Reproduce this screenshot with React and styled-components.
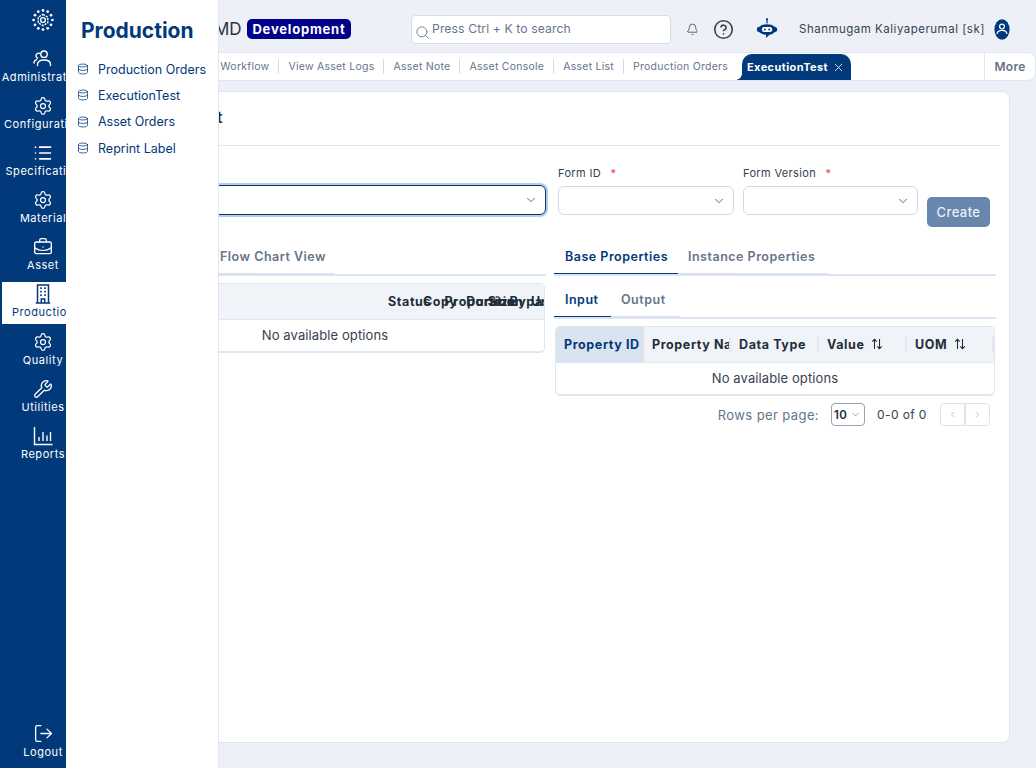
import React from 'react';
import styled, { createGlobalStyle } from 'styled-components';
import { Bell, CircleHelp, ChevronDown, ChevronLeft, ChevronRight, Database, List, Settings, BriefcaseBusiness, Wrench, LogOut, X, Search } from 'lucide-react';

const NAVY = '#01397a';

const Global = createGlobalStyle`
    html, body { margin: 0; padding: 0; height: 100%; }
    body { font-family: Inter, "Noto Sans", "Liberation Sans", sans-serif; background: #edf1f7; overflow: hidden; }
    * { box-sizing: border-box; }
`;

const Page = styled.div`
    position: relative;
    display: flex;
    width: 1036px;
    height: 768px;
    overflow: hidden;
`;

const Sidebar = styled.nav`
    flex: 0 0 66px;
    height: 768px;
    background: ${NAVY};
    display: flex;
    flex-direction: column;
    overflow: hidden;
    padding-top: 9px;
`;

const SideItem = styled.div`
    flex: 0 0 auto;
    width: 82px;
    margin-left: 2px;
    height: ${props => props.$h || 47}px;
    display: flex;
    flex-direction: column;
    align-items: center;
    gap: 1px;
    color: ${props => props.$active ? NAVY : '#fff'};
    background: ${props => props.$active ? '#fff' : 'transparent'};
    padding-top: ${props => props.$active ? 2 : 0}px;
    margin-top: ${props => props.$active ? -2 : 0}px;
    margin-bottom: ${props => props.$active ? 8 : 0}px;
    ${props => props.$bottom && 'margin-top: auto; margin-bottom: 3px;'}
`;

const SideLabel = styled.span`
    font-size: 11px;
    line-height: 14px;
    letter-spacing: 0.55px;
    white-space: nowrap;
`;

const LogoWrap = styled.div`
    flex: 0 0 40px;
    width: 86px;
    display: flex;
    justify-content: center;
    align-items: flex-start;
    color: #fff;
`;

const Flyout = styled.aside`
    position: absolute;
    left: 66px;
    top: 0;
    width: 153px;
    height: 768px;
    background: #fff;
    border-right: 1px solid #dfe6f0;
    z-index: 5;
`;

const FlyoutTitle = styled.h2`
    margin: 16px 0 10px 15px;
    font-size: 21px;
    line-height: 30px;
    font-weight: 700;
    color: ${NAVY};
    white-space: nowrap;
`;

const FlyoutItem = styled.div`
    height: 26.3px;
    display: flex;
    align-items: center;
    gap: 9px;
    padding-left: 11px;
    font-size: 12.5px;
    color: ${NAVY};
    white-space: nowrap;
`;

const Main = styled.main`
    flex: 1;
    min-width: 0;
    display: flex;
    flex-direction: column;
`;

const Header = styled.header`
    height: 52px;
    flex: 0 0 52px;
    display: flex;
    align-items: center;
    padding: 6px 0 0 148px;
`;

const AppName = styled.span`
    font-size: 17px;
    color: #2a3444;
    width: 26px;
`;

const EnvBadge = styled.span`
    margin-left: 7px;
    height: 20px;
    width: 104px;
    background: #00008b;
    border-radius: 5px;
    color: #fff;
    font-size: 13px;
    font-weight: 700;
    letter-spacing: 0.8px;
    display: flex;
    align-items: center;
    justify-content: center;
`;

const SearchBox = styled.div`
    margin-left: 60px;
    width: 260px;
    height: 29px;
    background: #fff;
    border: 1px solid #d5dde9;
    border-radius: 4px;
    display: flex;
    align-items: center;
    gap: 2px;
    padding: 0 3px;
    color: #687489;
    font-size: 12.2px;
    letter-spacing: 0.1px;
    & svg { margin-top: 6px; }
    & span { margin-top: -2px; }
`;

const IconSlot = styled.span`
    display: flex;
    align-items: center;
    justify-content: center;
    margin-left: ${props => props.$ml}px;
    color: ${props => props.$color || '#37414f'};
`;

const UserName = styled.span`
    margin-left: 21px;
    font-size: 11.5px;
    color: #37414f;
    letter-spacing: 0.5px;
    white-space: nowrap;
    width: 186px;
`;

const TabStrip = styled.div`
    height: 29px;
    flex: 0 0 29px;
    margin-left: 10px;
    background: #fff;
    border: 1px solid #dfe6f0;
    border-radius: 0 8px 8px 0;
    display: flex;
    align-items: flex-end;
    overflow: hidden;
`;

const TabList = styled.div`
    flex: 1;
    min-width: 0;
    height: 100%;
    display: flex;
    align-items: center;
    justify-content: flex-end;
    padding-right: 133px;
    position: relative;
`;

const PageTab = styled.span`
    font-size: 10.5px;
    letter-spacing: 0.25px;
    color: #67748a;
    white-space: nowrap;
    padding: 0 9px;
    line-height: 15px;
    border-right: ${props => props.$last ? '0' : '1px solid #d5dce6'};
`;

const ActiveTab = styled.span`
    position: relative;
    flex: 0 0 109px;
    margin-left: 5px;
    align-self: flex-end;
    height: 26px;
    background: ${NAVY};
    border-radius: 10px 10px 0 0;
    color: #fff;
    font-size: 11px;
    font-weight: 700;
    letter-spacing: 0.4px;
    display: flex;
    align-items: center;
    gap: 4px;
    padding-left: 5px;
    white-space: nowrap;
    &::before {
        content: '';
        position: absolute;
        left: -6px;
        bottom: 0;
        width: 6px;
        height: 6px;
        background: radial-gradient(circle at 0 0, transparent 5.5px, ${NAVY} 6px);
    }
`;

const MoreButton = styled.span`
    flex: 0 0 51px;
    height: 100%;
    border-left: 1px solid #dfe6f0;
    display: flex;
    align-items: center;
    justify-content: center;
    color: #67748a;
    font-size: 12px;
    font-weight: 600;
    letter-spacing: 0.3px;
`;

const Card = styled.section`
    margin: 10px 26px 0 25px;
    height: 652px;
    background: #fff;
    border: 1px solid #dfe6f0;
    border-radius: 8px;
    padding: 0 9px 0 8px;
`;

const CardTitle = styled.div`
    height: 54px;
    border-bottom: 1px solid #dfe6f0;
    display: flex;
    align-items: center;
    padding-left: 7px;
    padding-bottom: 4px;
    font-size: 16.5px;
    font-weight: 500;
    color: #1f2937;
`;

const Columns = styled.div`
    display: grid;
    grid-template-columns: 442px 442px;
    gap: 8px;
    padding: 20px 4px 0;
`;

const Column = styled.div`
    min-width: 0;
`;

const FormRow = styled.div`
    height: 74px;
    display: flex;
    align-items: flex-start;
    gap: 9px;
    padding: ${props => props.$left ? '0' : '0 6px 0 4px'};
`;

const Field = styled.div`
    width: ${props => props.$w ? props.$w + 'px' : '100%'};
`;

const Label = styled.label`
    display: block;
    height: 20px;
    font-size: 11px;
    line-height: 15px;
    letter-spacing: 0.35px;
    color: #37414f;
    & em { color: #f03e3e; font-style: normal; margin-left: 6px; }
`;

const Select = styled.div`
    border: 1px solid ${props => props.$focus ? NAVY : '#cfd9e7'};
    border-radius: 6px;
    background: #fff;
    display: flex;
    align-items: center;
    justify-content: flex-end;
    padding-right: 7px;
    color: #47597a;
    margin-top: ${props => props.$focus ? -1 : 0}px;
    height: ${props => props.$focus ? 30 : 29}px;
    box-shadow: ${props => props.$focus ? '0 0 0 2px #b9cce4' : 'none'};
`;

const CreateButton = styled.button`
    margin-top: 31px;
    width: 63px;
    height: 30px;
    border: 0;
    border-radius: 5px;
    background: #6787ad;
    color: #e9eff6;
    font-family: inherit;
    font-size: 13px;
    font-weight: 500;
    letter-spacing: 0.4px;
`;

const Tabs = styled.div`
    display: flex;
    height: ${props => props.$h}px;
    border-bottom: 2px solid #dbe4f0;
`;

const Tab = styled.div`
    width: ${props => props.$w}px;
    height: 100%;
    display: flex;
    align-items: center;
    padding-left: ${props => props.$ghost ? 10 : 11}px;
    padding-top: ${props => props.$pt || 0}px;
    font-size: 12.5px;
    font-weight: 600;
    letter-spacing: 0.5px;
    white-space: nowrap;
    color: ${props => props.$active ? NAVY : '#67748a'};
    border-bottom: 1px solid ${props => props.$active ? NAVY : 'transparent'};
    ${props => props.$ghost && 'border-image: linear-gradient(90deg, #dedfe0 0, #dedfe0 30%, #d8e2f1 45%) 1;'}
`;

const Table = styled.div`
    margin: 7px 1px 0;
    border: 1px solid #dfe6f0;
    border-bottom-width: 2px;
    border-radius: 5px;
    overflow: hidden;
`;

const HeadRow = styled.div`
    height: 36px;
    display: flex;
    align-items: center;
    background: #f0f4f9;
    border-bottom: 1px solid #dfe6f0;
    padding-left: ${props => props.$pad || 0}px;
    padding-bottom: ${props => props.$pad ? 1 : 0}px;
`;

const SquashedCell = styled.span`
    flex: 0 0 ${props => props.$w}px;
    width: ${props => props.$w}px;
    font-size: 12.5px;
    font-weight: 700;
    letter-spacing: 0.6px;
    color: #222d3b;
    white-space: nowrap;
`;

const HeadCell = styled.div`
    flex: 0 0 ${props => props.$w}px;
    height: 100%;
    position: relative;
    display: flex;
    align-items: center;
    gap: 7px;
    padding-left: 8px;
    padding-bottom: 1px;
    overflow: hidden;
    font-size: 12.5px;
    font-weight: 700;
    letter-spacing: 0.6px;
    white-space: nowrap;
    color: ${props => props.$active ? NAVY : '#222d3b'};
    background: ${props => props.$active ? '#dae4f0' : 'transparent'};
    &::after {
        content: '';
        display: ${props => props.$sep ? 'block' : 'none'};
        position: absolute;
        right: 0;
        top: 10px;
        bottom: 10px;
        width: 2px;
        background: #e1e7f0;
    }
`;

const EmptyRow = styled.div`
    height: 31px;
    padding-bottom: 1px;
    display: flex;
    align-items: center;
    justify-content: center;
    font-size: 13px;
    letter-spacing: 0.1px;
    color: #37414f;
`;

const Pager = styled.div`
    height: 23px;
    margin-top: 7px;
    display: flex;
    align-items: center;
    justify-content: flex-end;
    padding-right: 6px;
    color: #67748a;
    font-size: 13px;
    letter-spacing: 0.4px;
`;

const PageSize = styled.div`
    margin-left: 12px;
    width: 34px;
    height: 23px;
    border: 1px solid #98a2b0;
    border-radius: 4px;
    display: flex;
    align-items: center;
    justify-content: space-between;
    padding: 0 3px 0 2px;
    color: #222d3b;
    font-size: 11.5px;
    font-weight: 600;
`;

const PageCount = styled.span`
    margin-left: 12px;
    width: 63px;
    font-size: 12px;
    color: #37414f;
`;

const PageButton = styled.span`
    width: 25px;
    height: 23px;
    border: 1px solid #dfe3e9;
    border-radius: ${props => props.$side === 'left' ? '4px 0 0 4px' : '0 4px 4px 0'};
    display: flex;
    align-items: center;
    justify-content: center;
    color: #a4adba;
`;

const Logo = () => (
    <svg width="22" height="22" viewBox="0 0 22 22" fill="none" stroke="currentColor" strokeWidth="1.4">
        <circle cx="11" cy="11" r="2.4" />
        <path d="M11 5.4 15.8 8.2v5.6L11 16.6l-4.8-2.8V8.2z" strokeDasharray="2.2 1" />
        {[[11, 1.4], [15.7, 2.7], [19, 6.2], [20.4, 11], [19, 15.8], [15.7, 19.3], [11, 20.6], [6.3, 19.3], [3, 15.8], [1.6, 11], [3, 6.2], [6.3, 2.7]].map(([x, y]) => (
            <circle key={x + '-' + y} cx={x} cy={y} r="1.35" fill="currentColor" stroke="none" />
        ))}
    </svg>
);

const UsersIcon = () => (
    <svg width="20" height="20" viewBox="0 0 20 20" fill="none" stroke="currentColor" strokeWidth="1.4" strokeLinecap="round">
        <circle cx="11" cy="5.2" r="3.2" />
        <path d="M4.5 16.5v-1c0-3 2.8-4.5 6.5-4.5s6.5 1.5 6.5 4.5v1" />
        <path d="M6.8 4.2C4.4 3.8 2.8 5.2 3 7c.1 1 .7 1.8 1.6 2.2M3.6 10.6C2 11.2 1 12.3 1 14" />
    </svg>
);

const BuildingIcon = () => (
    <svg width="20" height="20" viewBox="0 0 20 20" fill="none" stroke="currentColor" strokeWidth="1.5">
        <path d="M4.5 1h11v18h-11zM2.8 19h14.4" />
        <path d="M7.2 4.2h1.6M11.2 4.2h1.6M7.2 7.7h1.6M11.2 7.7h1.6M7.2 11.2h1.6M11.2 11.2h1.6" strokeWidth="1.8" />
        <path d="M8.3 19v-4h3.4v4" />
    </svg>
);

const BarsIcon = () => (
    <svg width="20" height="20" viewBox="0 0 20 20" fill="none" stroke="currentColor" strokeWidth="1.4">
        <path d="M1.5 1v17.5h18M6 15v-4M10 15V6M14 15V9.5M17.5 15V6" />
    </svg>
);

const SortIcon = () => (
    <svg width="12" height="12" viewBox="0 0 12 12" fill="none" stroke="#222d3b" strokeWidth="1.1">
        <path d="M3.5 11V1.5M1.2 3.6 3.5 1.3l2.3 2.3M8.5 1v9.5M6.2 8.4l2.3 2.3 2.3-2.3" />
    </svg>
);

const RobotIcon = () => (
    <svg width="22" height="22" viewBox="0 0 22 22">
        <rect x="10.4" y="0.5" width="1.2" height="5" fill="#01397a" />
        <circle cx="11" cy="1.2" r="1" fill="#01397a" />
        <path d="M4 8.5C6 5.5 16 5.5 18 8.5c2.4.3 3.2 1.6 3.2 3s-.8 2.7-3.2 3c-1.2 1.6-3 2.2-4.5 2.3L10 20v-3.2c-2.5-.1-4.6-.8-6-2.3-2.4-.3-3.2-1.6-3.2-3s.8-2.7 3.2-3z" fill="#01397a" />
        <rect x="5.8" y="9" width="10.4" height="5" rx="2.5" fill="#fff" />
        <circle cx="8.8" cy="11.5" r="1" fill="#01397a" />
        <circle cx="13.2" cy="11.5" r="1" fill="#01397a" />
    </svg>
);

const AvatarIcon = () => (
    <svg width="16" height="21" viewBox="0 0 16 21">
        <ellipse cx="8" cy="10.5" rx="7.6" ry="10.3" fill="#01397a" />
        <circle cx="8" cy="7.6" r="2.4" fill="none" stroke="#fff" strokeWidth="1.2" />
        <path d="M3 15c.4-2.6 2.4-3.6 5-3.6s4.6 1 5 3.6" fill="none" stroke="#fff" strokeWidth="1.2" />
    </svg>
);

const navItems = [
    { label: 'Administration', icon: <UsersIcon /> },
    { label: 'Configuration', icon: <Settings size={20} strokeWidth={1.5} /> },
    { label: 'Specification', icon: <List size={20} strokeWidth={2} /> },
    { label: 'Material', icon: <Settings size={20} strokeWidth={1.5} /> },
    { label: 'Asset', icon: <BriefcaseBusiness size={20} strokeWidth={1.6} /> },
    { label: 'Production', icon: <BuildingIcon />, active: true },
    { label: 'Quality', icon: <Settings size={20} strokeWidth={1.5} /> },
    { label: 'Utilities', icon: <Wrench size={20} strokeWidth={1.5} /> },
    { label: 'Reports', icon: <BarsIcon /> },
];

const flyoutItems = ['Production Orders', 'ExecutionTest', 'Asset Orders', 'Reprint Label'];
const pageTabs = ['Asset Workflow', 'View Asset Logs', 'Asset Note', 'Asset Console', 'Asset List', 'Production Orders'];
const squashed = ['Copy', 'Proportion', 'Duration', 'Size', 'Bypass', 'Unit'];

const App = () => (
    <Page>
        <Global />
        <Sidebar>
            <LogoWrap><Logo /></LogoWrap>
            {navItems.map(item => (
                <SideItem key={item.label} $active={item.active} $h={item.active ? 42 : 47}>
                    {item.icon}
                    <SideLabel>{item.label}</SideLabel>
                </SideItem>
            ))}
            <SideItem $bottom $h={42}>
                <LogOut size={21} strokeWidth={1.5} />
                <SideLabel>Logout</SideLabel>
            </SideItem>
        </Sidebar>

        <Flyout>
            <FlyoutTitle>Production</FlyoutTitle>
            {flyoutItems.map(item => (
                <FlyoutItem key={item}>
                    <Database size={12} strokeWidth={1.5} />
                    {item}
                </FlyoutItem>
            ))}
        </Flyout>

        <Main>
            <Header>
                <AppName>MD</AppName>
                <EnvBadge>Development</EnvBadge>
                <SearchBox>
                    <Search size={15} strokeWidth={1.4} />
                    <span>Press Ctrl + K to search</span>
                </SearchBox>
                <IconSlot $ml={15}><Bell size={13} strokeWidth={1.4} /></IconSlot>
                <IconSlot $ml={14}><CircleHelp size={21} strokeWidth={1.8} /></IconSlot>
                <IconSlot $ml={22}><RobotIcon /></IconSlot>
                <UserName>Shanmugam Kaliyaperumal [sk]</UserName>
                <IconSlot $ml={9}><AvatarIcon /></IconSlot>
            </Header>

            <TabStrip>
                <TabList>
                    {pageTabs.map((tab, i) => (
                        <PageTab key={tab} $last={i === pageTabs.length - 1}>{tab}</PageTab>
                    ))}
                    <ActiveTab>
                        ExecutionTest
                        <X size={13} strokeWidth={1.5} />
                    </ActiveTab>
                </TabList>
                <MoreButton>More</MoreButton>
            </TabStrip>

            <Card>
                <CardTitle>Execution Test</CardTitle>
                <Columns>
                    <Column>
                        <FormRow $left>
                            <Field>
                                <Label>Product ID <em>*</em></Label>
                                <Select $focus><ChevronDown size={14} strokeWidth={1.5} /></Select>
                            </Field>
                        </FormRow>
                        <Tabs $h={36}>
                            <Tab $w={106} $active>Table View</Tab>
                            <Tab $w={124} $ghost>Flow Chart View</Tab>
                        </Tabs>
                        <Table>
                            <HeadRow $pad={282}>
                                <SquashedCell $w={35}>Status</SquashedCell>
                                {squashed.map(name => (
                                    <SquashedCell key={name} $w={21.6}>{name}</SquashedCell>
                                ))}
                            </HeadRow>
                            <EmptyRow>No available options</EmptyRow>
                        </Table>
                    </Column>

                    <Column>
                        <FormRow>
                            <Field $w={176}>
                                <Label>Form ID <em>*</em></Label>
                                <Select><ChevronDown size={14} strokeWidth={1.5} /></Select>
                            </Field>
                            <Field $w={175}>
                                <Label>Form Version <em>*</em></Label>
                                <Select><ChevronDown size={14} strokeWidth={1.5} /></Select>
                            </Field>
                            <CreateButton>Create</CreateButton>
                        </FormRow>
                        <Tabs $h={36}>
                            <Tab $w={124} $active>Base Properties</Tab>
                            <Tab $w={149} $ghost>Instance Properties</Tab>
                        </Tabs>
                        <Tabs $h={43}>
                            <Tab $w={57} $pt={7} $active>Input</Tab>
                            <Tab $w={69} $pt={7} $ghost>Output</Tab>
                        </Tabs>
                        <Table>
                            <HeadRow>
                                <HeadCell $w={88} $active>Property ID</HeadCell>
                                <HeadCell $w={87} $sep>Property Name</HeadCell>
                                <HeadCell $w={88} $sep>Data Type</HeadCell>
                                <HeadCell $w={88} $sep>Value <SortIcon /></HeadCell>
                                <HeadCell $w={87} $sep>UOM <SortIcon /></HeadCell>
                            </HeadRow>
                            <EmptyRow>No available options</EmptyRow>
                        </Table>
                        <Pager>
                            Rows per page:
                            <PageSize>10<ChevronDown size={11} strokeWidth={1.4} color="#67748a" /></PageSize>
                            <PageCount>0-0 of 0</PageCount>
                            <PageButton $side="left"><ChevronLeft size={9} /></PageButton>
                            <PageButton><ChevronRight size={9} /></PageButton>
                        </Pager>
                    </Column>
                </Columns>
            </Card>
        </Main>
    </Page>
);

export default App;
